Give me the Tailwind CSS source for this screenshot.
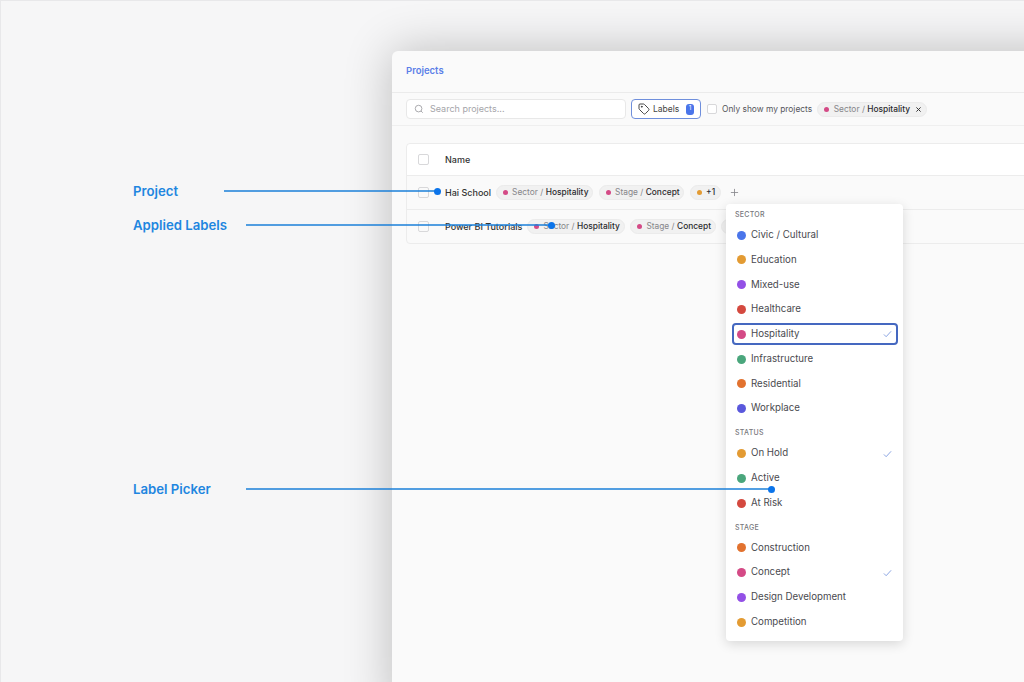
<!DOCTYPE html>
<html>
<head>
<meta charset="utf-8">
<script src="https://cdn.jsdelivr.net/npm/@tailwindcss/browser@4"></script>
</head>
<body class="m-0">
<div class="relative w-[1024px] h-[682px] overflow-hidden bg-[#f6f6f7] font-['Inter',sans-serif] border-t border-l border-[#e8e8ea]">

  <!-- app window -->
  <div class="absolute left-[391px] top-[50px] w-[700px] h-[660px] bg-[#fafafa] rounded-tl-md shadow-[0_0_48px_rgba(0,0,0,0.24)] flex flex-col">
    <div class="h-[42px] flex items-center px-[14px] border-b border-[#ebebeb] shrink-0">
      <span class="text-[9.5px] font-semibold text-[#5b7fe8]">Projects</span>
    </div>
    <div class="h-[33px] flex items-center pl-[14px] border-b border-[#efefef] shrink-0">
      <div class="w-[220px] h-[20px] bg-white border border-[#e8e8e8] rounded flex items-center pl-[7px] gap-[6px]">
        <svg class="w-[10px] h-[10px]" viewBox="0 0 24 24" fill="none" stroke="#9a9a9f" stroke-width="2"><circle cx="11" cy="11" r="8"/><path d="M21 21l-4.3-4.3"/></svg>
        <span class="text-[9px] text-[#a5a5a9]">Search projects...</span>
      </div>
      <div class="ml-[5px] w-[70px] h-[20px] bg-white border border-[#6f8fdc] rounded flex items-center pl-[6px] pr-[6px]">
        <svg class="w-[12px] h-[12px] shrink-0" viewBox="0 0 24 24" fill="none" stroke="#333" stroke-width="1.8" stroke-linecap="round" stroke-linejoin="round"><path d="M12.586 2.586A2 2 0 0 0 11.172 2H4a2 2 0 0 0-2 2v7.172a2 2 0 0 0 .586 1.414l8.704 8.704a2.426 2.426 0 0 0 3.42 0l6.58-6.58a2.426 2.426 0 0 0 0-3.42z"/><circle cx="7.5" cy="7.5" r=".8" fill="#333"/></svg>
        <span class="ml-[3px] text-[8.5px] font-normal text-[#444]">Labels</span>
        <span class="ml-auto w-[8px] h-[11px] rounded-[3px] bg-[#4a75ea] text-white text-[6.5px] flex items-center justify-center">1</span>
      </div>
      <div class="ml-[6px] w-[10px] h-[10px] bg-white border border-[#d8d8da] rounded-[2px]"></div>
      <span class="ml-[5px] text-[8.4px] font-normal text-[#55555a]">Only show my projects</span>
      <div class="ml-[5px] h-[15px] w-[110px] pl-[6px] rounded-full bg-[#f1f1f1] border border-[#ebebeb] flex items-center text-[8.4px]">
        <span class="w-[5px] h-[5px] rounded-full bg-[#d44a86] mr-[4.5px]"></span>
        <span class="text-[#87878b]">Sector /&nbsp;</span><span class="text-[#2b2b2f] font-medium">Hospitality</span>
        <svg class="w-[7px] h-[7px] ml-[5px]" viewBox="0 0 10 10" stroke="#333" stroke-width="1.4"><path d="M2 2l6 6M8 2l-6 6"/></svg>
      </div>
    </div>

    <!-- table -->
    <div class="ml-[14px] mt-[17px] w-[720px] border border-[#ececec] rounded bg-[#fafafa] text-[9px]">
      <div class="h-[32px] flex items-center bg-white border-b border-[#ececec] rounded-t pl-[11px]">
        <div class="w-[11px] h-[11px] bg-white border border-[#d8d8da] rounded-[2px]"></div>
        <span class="ml-[16px] font-medium text-[#333]">Name</span>
      </div>
      <div class="h-[34px] flex items-center border-b border-[#ececec] pl-[11px]">
        <div class="w-[11px] h-[11px] bg-[#fafafa] border border-[#d8d8da] rounded-[2px]"></div>
        <span class="ml-[16px] font-medium text-[#333]">Hai School</span>
        <div class="ml-[5px] flex items-center gap-[6px] text-[8.4px]">
          <div class="h-[15px] w-[97px] pl-[5.5px] rounded-full bg-[#f1f1f1] border border-[#ebebeb] flex items-center"><span class="w-[5px] h-[5px] rounded-full bg-[#d44a86] mr-[4.5px]"></span><span class="text-[#87878b]">Sector /&nbsp;</span><span class="text-[#2b2b2f] font-medium">Hospitality</span></div>
          <div class="h-[15px] w-[85px] pl-[5.5px] rounded-full bg-[#f1f1f1] border border-[#ebebeb] flex items-center"><span class="w-[5px] h-[5px] rounded-full bg-[#d44a86] mr-[4.5px]"></span><span class="text-[#87878b]">Stage /&nbsp;</span><span class="text-[#2b2b2f] font-medium">Concept</span></div>
          <div class="h-[15px] w-[31px] pl-[5.5px] rounded-full bg-[#f1f1f1] border border-[#ebebeb] flex items-center"><span class="w-[5px] h-[5px] rounded-full bg-[#e39b33] mr-[4.5px]"></span><span class="text-[#2b2b2f] font-medium">+1</span></div>
          <svg class="ml-[3px] w-[9px] h-[9px]" viewBox="0 0 10 10" stroke="#85858a" stroke-width="0.9"><path d="M5 1v8M1 5h8"/></svg>
        </div>
      </div>
      <div class="h-[33px] flex items-center rounded-b pl-[11px]">
        <div class="w-[11px] h-[11px] bg-[#fafafa] border border-[#d8d8da] rounded-[2px]"></div>
        <span class="ml-[16px] font-medium text-[#333]">Power BI Tutorials</span>
        <div class="ml-[5px] flex items-center gap-[5px] text-[8.4px]">
          <div class="h-[15px] w-[98px] pl-[5.5px] rounded-full bg-[#f1f1f1] border border-[#ebebeb] flex items-center"><span class="w-[5px] h-[5px] rounded-full bg-[#d44a86] mr-[4.5px]"></span><span class="text-[#87878b]">Sector /&nbsp;</span><span class="text-[#2b2b2f] font-medium">Hospitality</span></div>
          <div class="h-[15px] w-[86px] pl-[5.5px] rounded-full bg-[#f1f1f1] border border-[#ebebeb] flex items-center"><span class="w-[5px] h-[5px] rounded-full bg-[#d44a86] mr-[4.5px]"></span><span class="text-[#87878b]">Stage /&nbsp;</span><span class="text-[#2b2b2f] font-medium">Concept</span></div>
          <div class="h-[15px] w-[30px] rounded-full bg-[#f1f1f1] border border-[#ebebeb]"></div>
        </div>
      </div>
    </div>
  </div>

  <!-- label picker menu -->
  <div class="absolute left-[725px] top-[203px] w-[177px] h-[437px] bg-white rounded-[4px] shadow-[0_3px_12px_rgba(0,0,0,0.14)] pl-[6px] pr-[5px] pt-[2.8px] text-[9.7px] text-[#4a4a4f]">
    <div class="h-[16px] leading-[16px] pl-[3px] text-[7px] tracking-[0.04em] font-medium text-[#77777c]">SECTOR</div>
    <div class="h-[24.8px] flex items-center pl-[5px] gap-[5px]"><span class="w-[9px] h-[9px] rounded-full bg-[#4a75ea]"></span>Civic / Cultural</div>
    <div class="h-[24.8px] flex items-center pl-[5px] gap-[5px]"><span class="w-[9px] h-[9px] rounded-full bg-[#e39b33]"></span>Education</div>
    <div class="h-[24.8px] flex items-center pl-[5px] gap-[5px]"><span class="w-[9px] h-[9px] rounded-full bg-[#9350e6]"></span>Mixed-use</div>
    <div class="h-[24.8px] flex items-center pl-[5px] gap-[5px]"><span class="w-[9px] h-[9px] rounded-full bg-[#d4493f]"></span>Healthcare</div>
    <div class="h-[22px] my-[1.4px] flex items-center pl-[3px] gap-[5px] border-2 border-[#4568c0] rounded-[4px]"><span class="w-[9px] h-[9px] rounded-full bg-[#d44a86]"></span>Hospitality
      <svg class="ml-auto mr-[4.5px] w-[9px] h-[8px]" viewBox="0 0 10 8" fill="none" stroke="#6f8fdc" stroke-width="0.9"><path d="M1 4.5l2.5 2.5 5.5-6"/></svg></div>
    <div class="h-[24.8px] flex items-center pl-[5px] gap-[5px]"><span class="w-[9px] h-[9px] rounded-full bg-[#4aa67c]"></span>Infrastructure</div>
    <div class="h-[24.8px] flex items-center pl-[5px] gap-[5px]"><span class="w-[9px] h-[9px] rounded-full bg-[#e2722f]"></span>Residential</div>
    <div class="h-[24.8px] flex items-center pl-[5px] gap-[5px]"><span class="w-[9px] h-[9px] rounded-full bg-[#5a58dc]"></span>Workplace</div>
    <div class="mt-[4px] h-[16px] leading-[16px] pl-[3px] text-[7px] tracking-[0.04em] font-medium text-[#77777c]">STATUS</div>
    <div class="h-[24.8px] flex items-center pl-[5px] gap-[5px]"><span class="w-[9px] h-[9px] rounded-full bg-[#e39b33]"></span>On Hold
      <svg class="ml-auto mr-[6.5px] w-[9px] h-[8px]" viewBox="0 0 10 8" fill="none" stroke="#6f8fdc" stroke-width="0.9"><path d="M1 4.5l2.5 2.5 5.5-6"/></svg></div>
    <div class="h-[24.8px] flex items-center pl-[5px] gap-[5px]"><span class="w-[9px] h-[9px] rounded-full bg-[#4aa67c]"></span>Active</div>
    <div class="h-[24.8px] flex items-center pl-[5px] gap-[5px]"><span class="w-[9px] h-[9px] rounded-full bg-[#d4493f]"></span>At Risk</div>
    <div class="mt-[4px] h-[16px] leading-[16px] pl-[3px] text-[7px] tracking-[0.04em] font-medium text-[#77777c]">STAGE</div>
    <div class="h-[24.8px] flex items-center pl-[5px] gap-[5px]"><span class="w-[9px] h-[9px] rounded-full bg-[#e2722f]"></span>Construction</div>
    <div class="h-[24.8px] flex items-center pl-[5px] gap-[5px]"><span class="w-[9px] h-[9px] rounded-full bg-[#d44a86]"></span>Concept
      <svg class="ml-auto mr-[6.5px] w-[9px] h-[8px]" viewBox="0 0 10 8" fill="none" stroke="#6f8fdc" stroke-width="0.9"><path d="M1 4.5l2.5 2.5 5.5-6"/></svg></div>
    <div class="h-[24.8px] flex items-center pl-[5px] gap-[5px]"><span class="w-[9px] h-[9px] rounded-full bg-[#9350e6]"></span>Design Development</div>
    <div class="h-[24.8px] flex items-center pl-[5px] gap-[5px]"><span class="w-[9px] h-[9px] rounded-full bg-[#e39b33]"></span>Competition</div>
  </div>

  <!-- annotations -->
  <div class="absolute left-[132px] top-[181px] h-[18px] leading-[18px] text-[13.2px] font-semibold text-[#1f86e0]">Project</div>
  <div class="absolute left-[223px] top-[189px] w-[213px] h-[2px] bg-[#1a7fd8]/75"></div>
  <div class="absolute left-[433px] top-[187px] w-[7px] h-[7px] rounded-full bg-[#0b74ea]"></div>

  <div class="absolute left-[132px] top-[215px] h-[18px] leading-[18px] text-[13.2px] font-semibold text-[#1f86e0]">Applied Labels</div>
  <div class="absolute left-[245px] top-[223px] w-[304px] h-[2px] bg-[#1a7fd8]/75"></div>
  <div class="absolute left-[547px] top-[221px] w-[7px] h-[7px] rounded-full bg-[#0b74ea]"></div>

  <div class="absolute left-[132px] top-[478.5px] h-[18px] leading-[18px] text-[13.2px] font-semibold text-[#1f86e0]">Label Picker</div>
  <div class="absolute left-[245px] top-[487px] w-[524px] h-[2px] bg-[#1a7fd8]/75"></div>
  <div class="absolute left-[767px] top-[485px] w-[7px] h-[7px] rounded-full bg-[#0b74ea]"></div>
</div>
</body>
</html>
